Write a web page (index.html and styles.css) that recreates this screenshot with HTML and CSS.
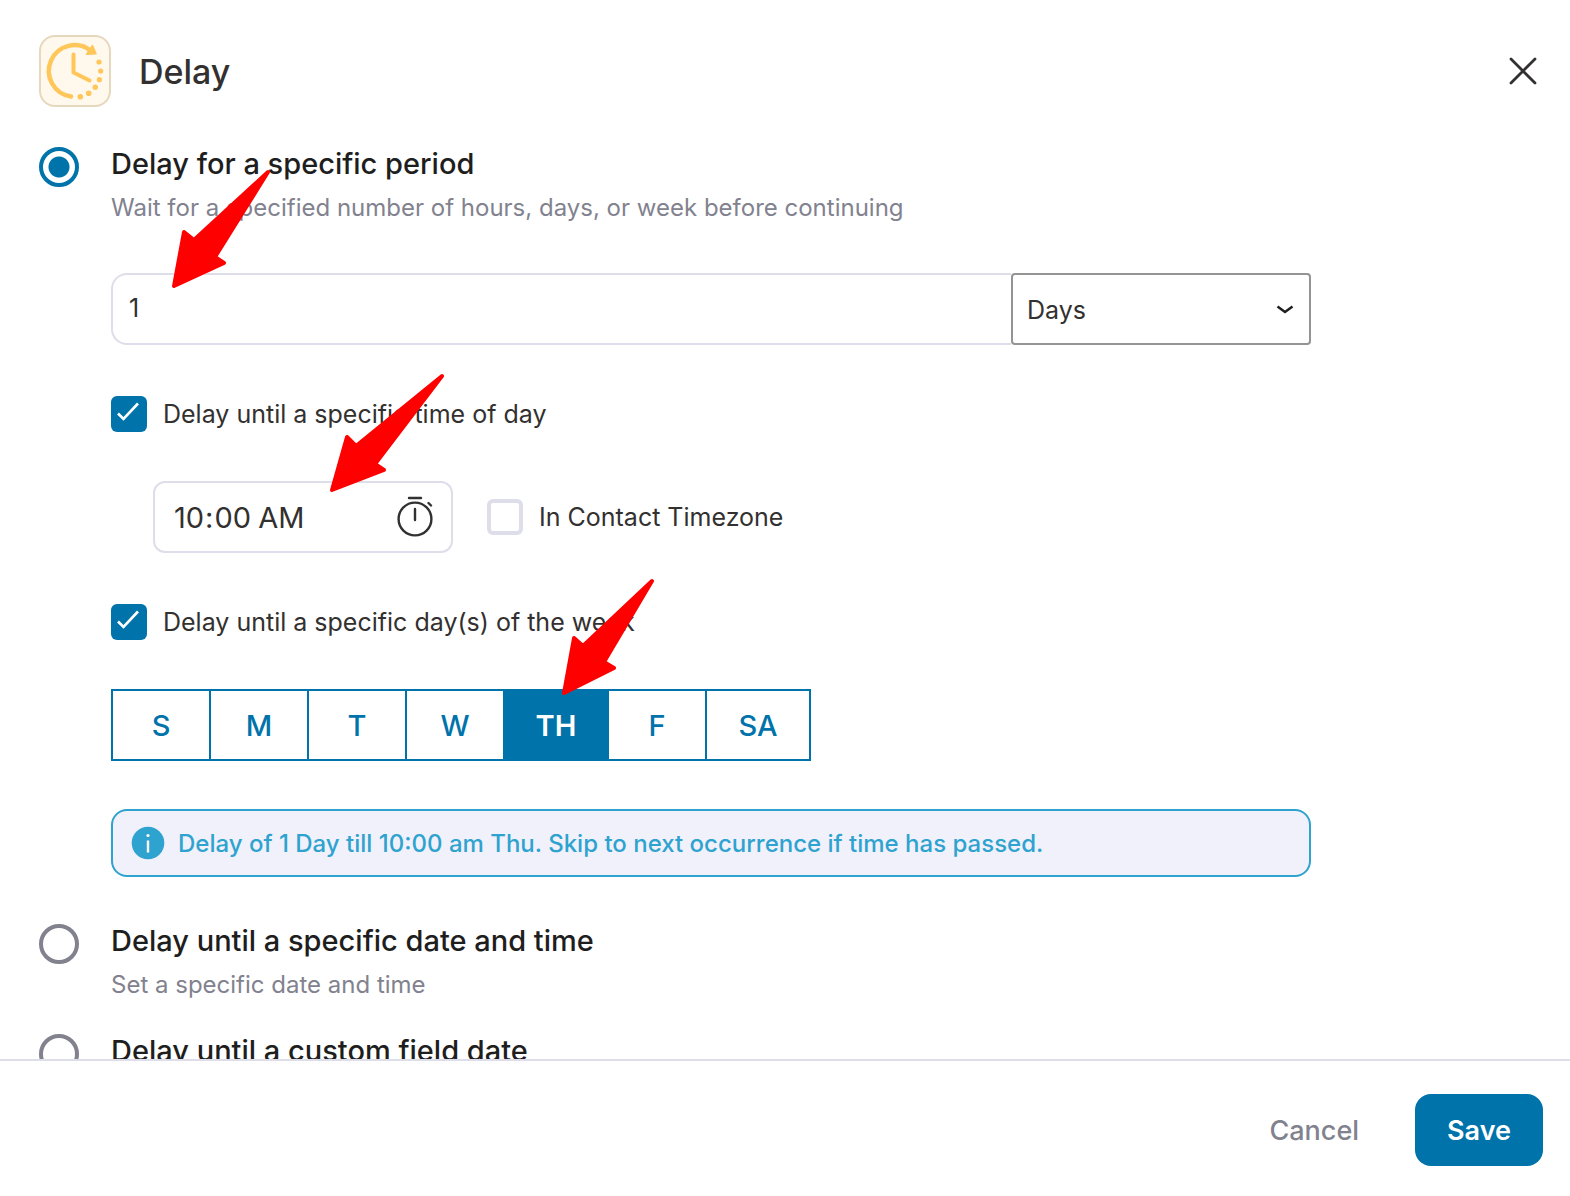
FILE: index.html
```html
<!DOCTYPE html>
<html lang="en-US">
<head>
    <meta charset="UTF-8">
    <meta name="viewport" content="width=device-width, initial-scale=1.0">
    <title>Delay</title>
    <link rel="stylesheet" href="styles.css">
</head>
<body>
    <div class="modal">
        <header class="modal-header">
            <svg class="modal-icon" viewBox="0 0 72 72" aria-hidden="true">
                <rect x="1" y="1" width="70" height="70" rx="15" fill="#fff8ec" stroke="#e6d8bc" stroke-width="2"/>
                <g fill="none" stroke="#ffc659" stroke-linecap="round" stroke-linejoin="round">
                    <path d="M32 61.5A25.8 25.8 0 1 1 52 16" stroke-width="4.5"/>
                    <path d="M34.5 19.5V37.5L50.5 45.5" stroke-width="4"/>
                </g>
                <g fill="#ffc659">
                    <path d="M53.5 10.5L57 18.8L47.5 19.3Z" stroke="#ffc659" stroke-width="1.5" stroke-linejoin="round"/>
                    <circle cx="60" cy="27" r="2.6"/>
                    <circle cx="61.7" cy="36" r="2.6"/>
                    <circle cx="60.3" cy="44.7" r="2.6"/>
                    <circle cx="56.3" cy="52.3" r="2.7"/>
                    <circle cx="49.7" cy="58.3" r="2.8"/>
                    <circle cx="41.3" cy="61.7" r="2.8"/>
                </g>
            </svg>
            <h1>Delay</h1>
            <button type="button" class="close-btn" aria-label="Close">
                <svg viewBox="0 0 28 28" width="28" height="28"><path d="M2 2L26 26M26 2L2 26" stroke="#333030" stroke-width="2.8" stroke-linecap="round"/></svg>
            </button>
        </header>

        <form class="modal-body" id="delayForm">
            <div class="option">
                <input type="radio" class="radio" name="delay_type" id="typePeriod" checked>
                <div class="option-content">
                    <label class="option-title" for="typePeriod">Delay for a specific period</label>
                    <p class="option-desc">Wait for a specified number of hours, days, or week before continuing</p>

                    <div class="period">
                        <div class="row period-row">
                            <input type="number" class="field period-value" value="1" min="1" aria-label="Delay amount">
                            <select class="period-unit" aria-label="Delay unit">
                                <option>Hours</option>
                                <option selected>Days</option>
                                <option>Weeks</option>
                            </select>
                            <svg class="arrow arrow-period" viewBox="0 0 98 120" aria-hidden="true"><path d="M2 117L12 63L22 71L96 3L43 88L52 94Z"/></svg>
                        </div>

                        <div class="row check-row">
                            <input type="checkbox" class="check" id="untilTime" checked>
                            <label for="untilTime">Delay until a specific time of day</label>
                        </div>

                        <div class="row time-row">
                            <div class="time-field">
                                <input type="time" class="field" value="10:00" aria-label="Time of day">
                                <svg class="time-icon" viewBox="0 0 40 44" fill="none" stroke="#333030" stroke-width="2.4" stroke-linecap="round" aria-hidden="true">
                                    <circle cx="20" cy="25" r="16.4"/>
                                    <path d="M14 4H26M20 15V26M33.5 9L36 11.5"/>
                                </svg>
                            </div>
                            <input type="checkbox" class="check" id="contactTz">
                            <label for="contactTz">In Contact Timezone</label>
                            <svg class="arrow arrow-time" viewBox="0 0 114 120" aria-hidden="true"><path d="M2 117L17 64L26 73L112 3L45 91L54 97Z"/></svg>
                        </div>

                        <div class="row check-row">
                            <input type="checkbox" class="check" id="untilDay" checked>
                            <label for="untilDay">Delay until a specific day(s) of the week</label>
                        </div>

                        <div class="row days">
                            <button type="button" class="day">S</button>
                            <button type="button" class="day">M</button>
                            <button type="button" class="day">T</button>
                            <button type="button" class="day">W</button>
                            <button type="button" class="day wide active">TH</button>
                            <button type="button" class="day">F</button>
                            <button type="button" class="day wide">SA</button>
                            <svg class="arrow arrow-days" viewBox="0 0 92 118" aria-hidden="true"><path d="M2 115L12 60L21 68L90 3L42 84L52 90Z"/></svg>
                        </div>

                        <div class="notice">
                            <svg viewBox="0 0 34 34" width="34" height="34" aria-hidden="true">
                                <circle cx="17" cy="17" r="16.3" fill="#2ea3cf"/>
                                <circle cx="17" cy="9.5" r="1.6" fill="#fff"/>
                                <path d="M17 14.5V26.5" stroke="#fff" stroke-width="2.4"/>
                            </svg>
                            <span>Delay of 1 Day till 10:00 am Thu. Skip to next occurrence if time has passed.</span>
                        </div>
                    </div>
                </div>
            </div>

            <div class="option">
                <input type="radio" class="radio" name="delay_type" id="typeDate">
                <div class="option-content">
                    <label class="option-title" for="typeDate">Delay until a specific date and time</label>
                    <p class="option-desc">Set a specific date and time</p>
                </div>
            </div>

            <div class="option">
                <input type="radio" class="radio" name="delay_type" id="typeField">
                <div class="option-content">
                    <label class="option-title" for="typeField">Delay until a custom field date</label>
                </div>
            </div>
        </form>

        <footer class="modal-footer">
            <button type="button" class="btn btn-link">Cancel</button>
            <button type="submit" form="delayForm" class="btn btn-primary">Save</button>
        </footer>
    </div>
</body>
</html>
```
FILE: styles.css
```css
* {
    margin: 0;
    padding: 0;
    box-sizing: border-box;
}

body {
    font-family: Inter, "Liberation Sans", sans-serif;
    font-size: 25px;
    color: #333030;
    background: #fff;
}

button,
input,
select {
    font: inherit;
    color: inherit;
}

button {
    border: none;
    background: none;
    cursor: pointer;
}

.modal {
    display: flex;
    flex-direction: column;
    height: 100vh;
}

/* Header */
.modal-header {
    display: flex;
    align-items: center;
    gap: 28px;
    padding: 35px 33px 37px 39px;
}

.modal-icon {
    width: 72px;
    height: 72px;
}

.modal-header h1 {
    flex: 1;
    font-size: 34px;
    font-weight: 500;
}

.close-btn {
    display: flex;
}

/* Options */
.modal-body {
    flex: 1;
    min-height: 0;
    overflow: hidden;
    padding: 0 39px;
}

.option {
    display: flex;
    align-items: flex-start;
    gap: 32px;
    margin-bottom: 30px;
}

.option-content {
    flex: 1;
}

.option-title {
    display: block;
    font-size: 29px;
    line-height: 40px;
    font-weight: 500;
    color: #1e1e1e;
}

.option-desc {
    margin-top: 8px;
    font-size: 24px;
    line-height: 32px;
    color: #82828f;
}

.radio {
    appearance: none;
    flex: none;
    width: 40px;
    height: 40px;
    margin-top: 3px;
    border: 4px solid #82828f;
    border-radius: 50%;
}

.radio:checked {
    border-color: #0073aa;
    background: radial-gradient(circle, #0073aa 10px, #fff 11px);
}

.check {
    appearance: none;
    flex: none;
    width: 36px;
    height: 36px;
    margin-right: 16px;
    border: 4px solid #dedeeb;
    border-radius: 6px;
}

.check:checked {
    border: none;
    background: #0073aa url("data:image/svg+xml,%3Csvg xmlns='http://www.w3.org/2000/svg' viewBox='0 0 36 36'%3E%3Cpath d='M7 17.5l5.5 5.5L27 7.5' fill='none' stroke='%23fff' stroke-width='2.6'/%3E%3C/svg%3E");
}

.period {
    max-width: 1200px;
    padding-top: 49px;
    padding-bottom: 14px;
}

.row {
    position: relative;
    display: flex;
    align-items: center;
}

.field {
    height: 72px;
    padding: 0 18px;
    border: 2px solid #dedeeb;
    border-radius: 12px;
    background: #fff;
}

.period-value {
    flex: 1;
    min-width: 0;
    padding: 0 16px 2px;
    border-right: none;
    border-radius: 16px 0 0 16px;
    appearance: textfield;
}

.period-value::-webkit-inner-spin-button {
    appearance: none;
}

.period-unit {
    appearance: none;
    width: 300px;
    height: 72px;
    padding: 2px 14px 0;
    border: 2px solid #949494;
    border-radius: 4px;
    background: #fff url("data:image/svg+xml,%3Csvg xmlns='http://www.w3.org/2000/svg' viewBox='0 0 18 10'%3E%3Cpath d='M1.5 2.5L9 8L16.5 2.5' fill='none' stroke='%231e1e1e' stroke-width='2.5'/%3E%3C/svg%3E") no-repeat right 15px center / 18px 10px;
}

.check-row {
    margin: 51px 0 49px;
}

.time-row {
    padding-left: 42px;
}

.time-field {
    position: relative;
    margin-right: 34px;
}

.time-field .field {
    width: 300px;
    font-size: 29px;
}

.time-field .field::-webkit-calendar-picker-indicator {
    display: none;
}

.time-icon {
    position: absolute;
    top: 13px;
    right: 18px;
    width: 40px;
    height: 44px;
    pointer-events: none;
}

.day {
    width: 100px;
    height: 72px;
    margin-right: -2px;
    border: 2px solid #0073aa;
    font-size: 29px;
    font-weight: 500;
    color: #0073aa;
}

.day.wide {
    width: 106px;
}

.day.active {
    background: #0073aa;
    color: #fff;
    font-weight: 600;
}

.notice {
    display: flex;
    align-items: center;
    gap: 13px;
    margin-top: 48px;
    height: 68px;
    padding: 0 18px;
    border: 2px solid #2ea3cf;
    border-radius: 16px;
    background: #f1f1fb;
    font-size: 24px;
    font-weight: 500;
    color: #2ea3cf;
}

/* Red pointers laid over the fields */
.arrow {
    position: absolute;
    z-index: 1;
    fill: #f00;
    stroke: #f00;
    stroke-width: 4px;
    stroke-linejoin: round;
    pointer-events: none;
}

.arrow-period {
    left: 61px;
    bottom: 56px;
    width: 98px;
    height: 120px;
}

.arrow-time {
    left: 219px;
    bottom: 60px;
    width: 114px;
    height: 120px;
}

.arrow-days {
    left: 451px;
    bottom: 65px;
    width: 92px;
    height: 118px;
}

/* Footer */
.modal-footer {
    display: flex;
    justify-content: flex-end;
    gap: 24px;
    padding: 33px 27px 30px;
    border-top: 2px solid #dedeeb;
}

.btn {
    height: 72px;
    padding: 0 32px;
    border-radius: 16px;
    font-size: 27px;
    font-weight: 500;
}

.btn-link {
    color: #82828f;
}

.btn-primary {
    background: #0073aa;
    color: #fff;
    font-weight: 600;
}
```
